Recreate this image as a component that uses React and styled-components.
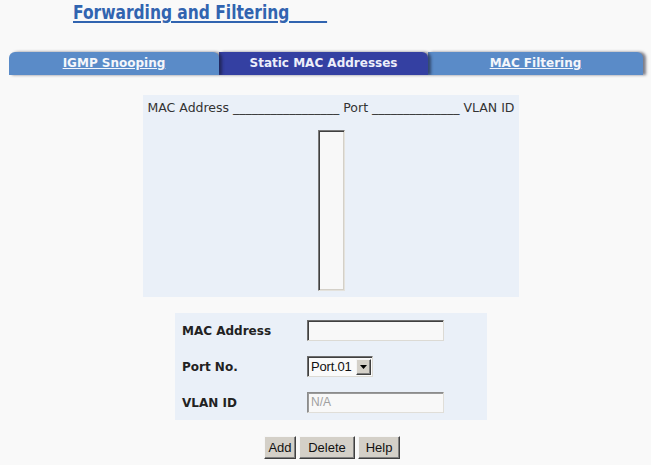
import styled, { createGlobalStyle } from "styled-components";

const GlobalStyle = createGlobalStyle`
  html, body {
    margin: 0;
    padding: 0;
    background: #f9f9f9;
    overflow: hidden;
  }
  body {
    font-family: "DejaVu Sans", Verdana, sans-serif;
  }
`;

const Page = styled.div`
  width: 651px;
  height: 465px;
  display: flex;
  flex-direction: column;
`;

const Title = styled.h1`
  margin: 0 0 0 73px;
  font-family: "Liberation Sans Narrow", "DejaVu Sans Condensed", "DejaVu Sans", sans-serif;
  font-weight: bold;
  font-size: 20px;
  line-height: 24px;
  color: #3164b0;
`;

const TitleText = styled.span`
  display: inline-block;
  transform: scaleX(0.86);
  transform-origin: left center;
  text-decoration: underline;
  text-decoration-thickness: 2px;
  text-underline-offset: 2px;
  white-space: pre;
`;

const TabBar = styled.div`
  display: flex;
  margin: 28px 0 0 9px;
  height: 23px;
`;

const Tab = styled.div`
  position: relative;
  z-index: ${(p) => p.$z};
  width: ${(p) => p.$w}px;
  height: 23px;
  display: flex;
  align-items: center;
  justify-content: center;
  background: ${(p) => (p.$active ? "#3440a2" : "#5a8bc8")};
  border-top-left-radius: ${(p) => (p.$first ? 6 : 0)}px;
  border-top-right-radius: 6px;
  box-shadow: 3px 0 3px rgba(20, 20, 40, 0.55);
  font-family: "DejaVu Sans", Verdana, sans-serif;
  font-weight: bold;
  font-size: 12px;
  color: ${(p) => (p.$active ? "#eceefa" : "#f4f6fb")};
  text-decoration: ${(p) => (p.$active ? "none" : "underline")};
  padding-bottom: 1px;
  box-sizing: border-box;
`;

const Body = styled.div`
  width: 640px;
  margin-left: 11px;
  display: flex;
  flex-direction: column;
  align-items: center;
`;

const ListPanel = styled.div`
  margin-top: 20px;
  width: 376px;
  height: 202px;
  box-sizing: border-box;
  padding-top: 6px;
  background: #eaf0f8;
  display: flex;
  flex-direction: column;
  align-items: center;
`;

const ListHeader = styled.div`
  font-family: "DejaVu Sans", Verdana, sans-serif;
  font-size: 12.5px;
  line-height: 14px;
  color: #333;
  white-space: pre;
`;

const ListBox = styled.div`
  margin-top: 15px;
  width: 27px;
  height: 161px;
  box-sizing: border-box;
  background: #f8f8f8;
  border: 1px solid;
  border-color: #7a7a7a #e4e2dc #e4e2dc #7a7a7a;
  box-shadow: inset 1px 1px 0 #404040, inset -1px -1px 0 #d4d0c8;
`;

const FormPanel = styled.div`
  margin-top: 16px;
  width: 312px;
  height: 107px;
  box-sizing: border-box;
  padding: 7px 7px 0 7px;
  background: #eaf0f8;
  display: grid;
  grid-template-columns: 125px auto;
  grid-auto-rows: 21px;
  row-gap: 15px;
  align-items: center;
`;

const Label = styled.div`
  font-family: "DejaVu Sans", Verdana, sans-serif;
  font-weight: bold;
  font-size: 12px;
  color: #222;
`;

const TextBox = styled.div`
  width: 137px;
  height: 21px;
  box-sizing: border-box;
  background: #f8f8f8;
  border: 1px solid;
  border-color: ${(p) =>
    p.$disabled ? "#8c8c8c #e0ded8 #e0ded8 #8c8c8c" : "#6e6e6e #dcdad4 #dcdad4 #6e6e6e"};
  box-shadow: ${(p) =>
    p.$disabled ? "inset 1px 1px 0 #9a9a9a" : "inset 1px 1px 0 #404040"};
  padding: 2px 3px;
  font-family: "Liberation Sans", Arial, sans-serif;
  font-size: 12px;
  line-height: 15px;
  color: #a0a0a0;
`;

const SelectBox = styled.div`
  width: 66px;
  height: 21px;
  box-sizing: border-box;
  display: flex;
  align-items: center;
  justify-content: space-between;
  background: #fafafa;
  border: 1px solid;
  border-color: #6e6e6e #dcdad4 #dcdad4 #6e6e6e;
  box-shadow: inset 1px 1px 0 #404040;
  padding: 1px 1px 1px 3px;
`;

const SelectValue = styled.span`
  font-family: "Liberation Sans", Arial, sans-serif;
  font-size: 13px;
  letter-spacing: -0.2px;
  color: #111;
`;

const SelectArrow = styled.div`
  width: 15px;
  height: 16px;
  box-sizing: border-box;
  display: flex;
  align-items: center;
  justify-content: center;
  background: #d4d0c8;
  border: 1px solid;
  border-color: #f4f4f4 #404040 #404040 #f4f4f4;
  box-shadow: inset -1px -1px 0 #808080;
`;

const ButtonRow = styled.div`
  margin-top: 16px;
  display: flex;
  gap: 3px;
  margin-left: 2px;
`;

const Button = styled.button`
  width: ${(p) => p.$w}px;
  height: 23px;
  padding: 0;
  background: #d4d0c8;
  border: 1px solid;
  border-color: #f6f6f6 #404040 #404040 #f6f6f6;
  box-shadow: inset -1px -1px 0 #808080;
  font-family: "Liberation Sans", Arial, sans-serif;
  font-size: 13px;
  color: #111;
`;

export default function App() {
  return (
    <Page>
      <GlobalStyle />
      <Title>
        <TitleText>{"Forwarding and Filtering\u00a0\u00a0\u00a0\u00a0\u00a0\u00a0\u00a0"}</TitleText>
      </Title>
      <TabBar>
        <Tab $w={210} $z={3} $first>IGMP Snooping</Tab>
        <Tab $w={209} $z={2} $active>Static MAC Addresses</Tab>
        <Tab $w={215} $z={1}>MAC Filtering</Tab>
      </TabBar>
      <Body>
        <ListPanel>
          <ListHeader>
            {"MAC Address _________________ Port ______________ VLAN ID"}
          </ListHeader>
          <ListBox />
        </ListPanel>
        <FormPanel>
          <Label>MAC Address</Label>
          <TextBox />
          <Label>Port No.</Label>
          <SelectBox>
            <SelectValue>Port.01</SelectValue>
            <SelectArrow>
              <svg width="7" height="4" viewBox="0 0 7 4">
                <path d="M0 0h7L3.5 4z" fill="#000" />
              </svg>
            </SelectArrow>
          </SelectBox>
          <Label>VLAN ID</Label>
          <TextBox $disabled>N/A</TextBox>
        </FormPanel>
        <ButtonRow>
          <Button $w={32}>Add</Button>
          <Button $w={56}>Delete</Button>
          <Button $w={42}>Help</Button>
        </ButtonRow>
      </Body>
    </Page>
  );
}
